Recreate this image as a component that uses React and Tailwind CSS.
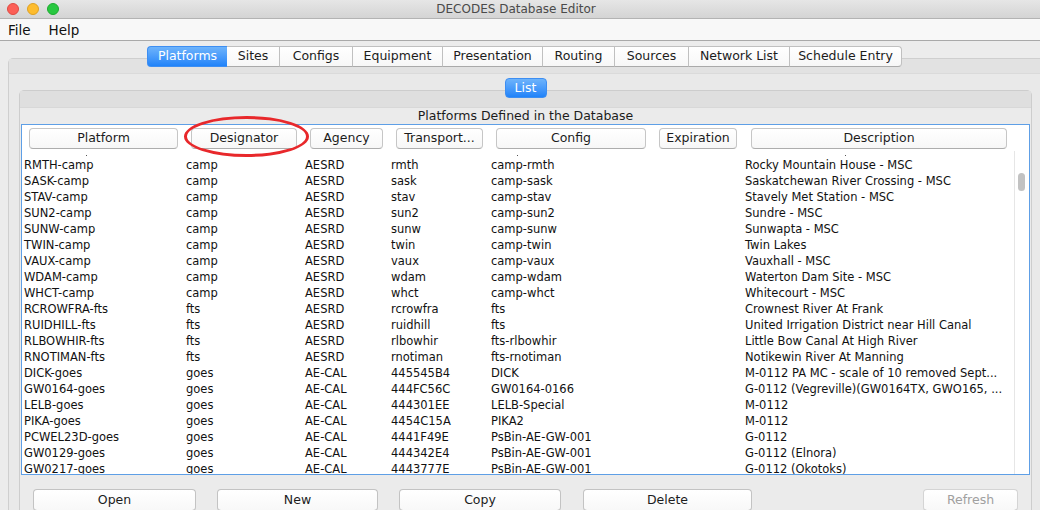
import React from 'react';

const tabs = [
  { label: 'Platforms', w: 'w-[80px]', active: true },
  { label: 'Sites', w: 'w-[53px]' },
  { label: 'Configs', w: 'w-[73px]' },
  { label: 'Equipment', w: 'w-[90px]' },
  { label: 'Presentation', w: 'w-[100px]' },
  { label: 'Routing', w: 'w-[72px]' },
  { label: 'Sources', w: 'w-[74px]' },
  { label: 'Network List', w: 'w-[101px]' },
  { label: 'Schedule Entry', w: 'w-[112px]' },
];

// column widths (px) for the table, header buttons sit inside with margins
const columns = [
  { label: 'Platform', w: 'w-[162px]' },
  { label: 'Designator', w: 'w-[119px]' },
  { label: 'Agency', w: 'w-[86px]' },
  { label: 'Transport...', w: 'w-[100px]' },
  { label: 'Config', w: 'w-[163px]' },
  { label: 'Expiration', w: 'w-[91px]' },
  { label: 'Description', w: 'w-[271px]' },
];

const rows = [
  ['RMTH-camp', 'camp', 'AESRD', 'rmth', 'camp-rmth', '', 'Rocky Mountain House - MSC'],
  ['SASK-camp', 'camp', 'AESRD', 'sask', 'camp-sask', '', 'Saskatchewan River Crossing - MSC'],
  ['STAV-camp', 'camp', 'AESRD', 'stav', 'camp-stav', '', 'Stavely Met Station - MSC'],
  ['SUN2-camp', 'camp', 'AESRD', 'sun2', 'camp-sun2', '', 'Sundre - MSC'],
  ['SUNW-camp', 'camp', 'AESRD', 'sunw', 'camp-sunw', '', 'Sunwapta - MSC'],
  ['TWIN-camp', 'camp', 'AESRD', 'twin', 'camp-twin', '', 'Twin Lakes'],
  ['VAUX-camp', 'camp', 'AESRD', 'vaux', 'camp-vaux', '', 'Vauxhall - MSC'],
  ['WDAM-camp', 'camp', 'AESRD', 'wdam', 'camp-wdam', '', 'Waterton Dam Site - MSC'],
  ['WHCT-camp', 'camp', 'AESRD', 'whct', 'camp-whct', '', 'Whitecourt - MSC'],
  ['RCROWFRA-fts', 'fts', 'AESRD', 'rcrowfra', 'fts', '', 'Crownest River At Frank'],
  ['RUIDHILL-fts', 'fts', 'AESRD', 'ruidhill', 'fts', '', 'United Irrigation District near Hill Canal'],
  ['RLBOWHIR-fts', 'fts', 'AESRD', 'rlbowhir', 'fts-rlbowhir', '', 'Little Bow Canal At High River'],
  ['RNOTIMAN-fts', 'fts', 'AESRD', 'rnotiman', 'fts-rnotiman', '', 'Notikewin River At Manning'],
  ['DICK-goes', 'goes', 'AE-CAL', '445545B4', 'DICK', '', 'M-0112 PA MC - scale of 10 removed Sept...'],
  ['GW0164-goes', 'goes', 'AE-CAL', '444FC56C', 'GW0164-0166', '', 'G-0112 (Vegreville)(GW0164TX, GWO165, ...'],
  ['LELB-goes', 'goes', 'AE-CAL', '444301EE', 'LELB-Special', '', 'M-0112'],
  ['PIKA-goes', 'goes', 'AE-CAL', '4454C15A', 'PIKA2', '', 'M-0112'],
  ['PCWEL23D-goes', 'goes', 'AE-CAL', '4441F49E', 'PsBin-AE-GW-001', '', 'G-0112'],
  ['GW0129-goes', 'goes', 'AE-CAL', '444342E4', 'PsBin-AE-GW-001', '', 'G-0112 (Elnora)'],
  ['GW0217-goes', 'goes', 'AE-CAL', '4443777E', 'PsBin-AE-GW-001', '', 'G-0112 (Okotoks)'],
];

const AquaButton = ({ children, className = '', disabled }) => (
  <button
    className={`h-[22px] rounded-[4px] border border-[#c3c3c3] border-b-[#a9a9a9] bg-gradient-to-b from-white to-[#f8f8f8] text-[12.5px] leading-none shadow-[0_1px_0_rgba(0,0,0,0.04)] ${
      disabled ? 'text-[#a0a0a0] border-[#d4d4d4]' : 'text-[#1c1c1c]'
    } ${className}`}
  >
    {children}
  </button>
);

const App = () => {
  return (
    <div className="relative w-[1040px] h-[510px] overflow-hidden bg-[#ececec] font-['DejaVu_Sans',sans-serif]">
      {/* title bar */}
      <div className="relative flex items-center h-[19px] border-b border-[#b3b3b3] bg-gradient-to-b from-[#e6e6e6] to-[#d4d4d4]">
        <div className="flex gap-[8px] pl-[7px]">
          <span className="w-[12px] h-[12px] rounded-full bg-[#fc5f57] border border-[#df4a42]" />
          <span className="w-[12px] h-[12px] rounded-full bg-[#fdbc2e] border border-[#dea123]" />
          <span className="w-[12px] h-[12px] rounded-full bg-[#28c840] border border-[#1dab2f]" />
        </div>
        <div className="flex-1 text-center text-[12px] text-[#4a4a4a] pr-[67px]">DECODES Database Editor</div>
      </div>

      {/* menu bar */}
      <div className="flex items-center h-[22px] pt-[2px] border-b border-[#a9a9a9] bg-[#f8f8f8] text-[13.5px] text-[#111]">
        <span className="ml-[8px]">File</span>
        <span className="ml-[18px]">Help</span>
      </div>

      {/* main tabs */}
      <div className="pt-[5px]">
        <div className="relative z-10 flex ml-[147px] h-[21px]">
          {tabs.map((t, i) => (
            <div
              key={t.label}
              className={`${t.w} flex items-center justify-center text-[12.5px] border-y ${
                t.active
                  ? 'rounded-l-[4px] border-l border-[#3d8ef2] bg-gradient-to-b from-[#6db3fb] to-[#1f83f9] text-white'
                  : 'border-[#c0c0c0] border-b-[#aaaaaa] bg-gradient-to-b from-white to-[#f7f7f7] text-[#1c1c1c] border-r'
              } ${i === tabs.length - 1 ? 'rounded-r-[4px]' : ''}`}
            >
              {t.label}
            </div>
          ))}
        </div>

        {/* outer pane */}
        <div className="ml-[8px] w-[1045px] -mt-[9px] rounded-t-[5px] border border-[#cfcfcf] bg-[#e9e9e9]">
          <div className="h-[15px] bg-[#e2e2e2] border-b border-[#dadada]" />
          <div className="pt-[4px] pl-[10px]">
            <div className="relative z-10 flex justify-center w-[1013px] h-[20px]">
              <div className="w-[42px] flex items-center justify-center rounded-[4px] border border-[#3d8ef2] bg-gradient-to-b from-[#6db3fb] to-[#1f83f9] text-white text-[12.5px]">
                List
              </div>
            </div>

            {/* inner pane */}
            <div className="w-[1013px] -mt-[8px] rounded-t-[5px] border border-[#cdcdcd] bg-[#ebebeb]">
              <div className="h-[17px] bg-[#dfdfdf] border-b border-[#d8d8d8]" />
              <div className="h-[16px] flex items-center justify-center text-[12.5px] text-[#1c1c1c]">
                Platforms Defined in the Database
              </div>

              {/* table */}
              <div className="mx-[1px] h-[351px] border border-[#5e9fe6] bg-white flex flex-col overflow-hidden">
                <div className="flex h-[26px] pt-[3px] shrink-0">
                  {columns.map((c, i) => (
                    <div key={c.label} className={`${c.w} flex ${i === 6 ? 'pl-[8px] pr-[7px]' : 'pl-[7px] pr-[6px]'}`}>
                      <div className="flex-1 h-[21px] flex items-center justify-center rounded-[4px] border border-[#c6c6c6] border-b-[#adadad] bg-gradient-to-b from-white to-[#f7f7f7] text-[12.5px] text-[#1c1c1c]">
                        {c.label}
                      </div>
                    </div>
                  ))}
                </div>

                <div className="flex flex-1 min-h-0">
                  <div className="flex-1 overflow-hidden">
                    <div className="relative h-[7px]">
                      <span className="absolute left-[64px] top-[4px] w-[1px] h-[1px] bg-[#555]" />
                      <span className="absolute left-[495px] top-[4px] w-[1px] h-[1px] bg-[#555]" />
                      <span className="absolute left-[823px] top-[4px] w-[1px] h-[1px] bg-[#555]" />
                    </div>
                    {rows.map((r, ri) => (
                      <div key={ri} className="flex h-[16px] items-center text-[11.5px] text-[#111]">
                        {r.map((cell, ci) => (
                          <div key={ci} className={`${columns[ci].w} shrink-0 pl-[2px] whitespace-nowrap overflow-hidden`}>
                            {cell}
                          </div>
                        ))}
                      </div>
                    ))}
                  </div>
                  {/* scrollbar */}
                  <div className="w-[15px] border-l border-[#e6e6e6] bg-white pt-[22px] pl-[3px]">
                    <div className="w-[7px] h-[18px] rounded-full bg-[#c2c2c2]" />
                  </div>
                </div>
              </div>

              {/* bottom buttons */}
              <div className="flex pt-[14px] pl-[13px]">
                <AquaButton className="w-[163px]">Open</AquaButton>
                <AquaButton className="w-[161px] ml-[21px]">New</AquaButton>
                <AquaButton className="w-[162px] ml-[21px]">Copy</AquaButton>
                <AquaButton className="w-[169px] ml-[22px]">Delete</AquaButton>
                <AquaButton className="w-[95px] ml-[171px]" disabled>Refresh</AquaButton>
              </div>
            </div>
          </div>
        </div>
      </div>

      {/* red annotation ellipse around Designator */}
      <div className="absolute left-[184px] top-[116px] w-[125px] h-[41px] rounded-[50%] border-[3px] border-[#e8282b]" />
    </div>
  );
};

export default App;
